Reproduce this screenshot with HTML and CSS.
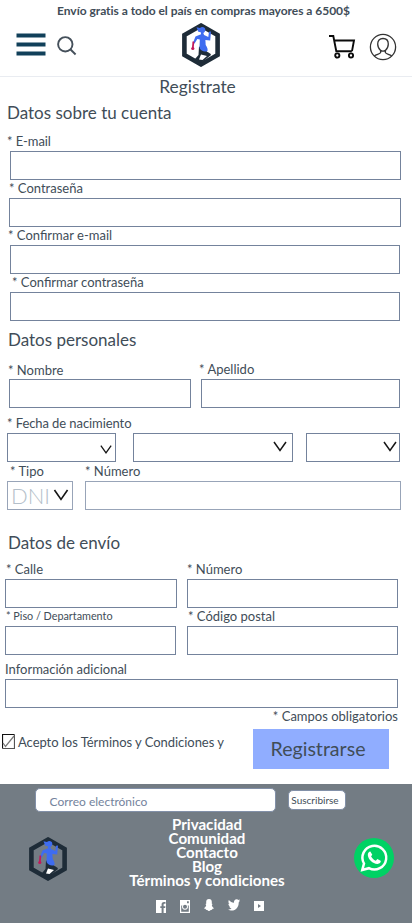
FILE: index.html
```html
<!DOCTYPE html>
<html lang="es">
<head>
<meta charset="utf-8">
<meta name="viewport" content="width=device-width, initial-scale=1">
<title>Registrate</title>
<link rel="stylesheet" href="styles.css">
</head>
<body>
<svg class="defs" width="0" height="0" aria-hidden="true">
  <symbol id="logo" viewBox="0 0 38 44">
    <path d="M19 2.600 35.600 12v20L19 41.400 2.400 32V12z" fill="none" stroke="#1e2c38" stroke-width="4.600"/>
    <path d="M17 23.500c3 2 5 1 7 4 1.600 2.500 4.500 2 5 4.500L19 40l-6-4 3.500-4z" fill="#1e2c38"/>
    <path d="M19 31.500l6 1.500-4.500 4-3.500-.5z" class="logo-gap"/>
    <path d="M14.500 4.300l3.500.7c2-1.800 5.300-.8 5.300 1.700 0 1.600-.8 2.600-2 3.400l.8 2 4.200 2 .7-5.300 2-.2-.8 8.800-4.800-.4.300 5c1 2 2.300 3 1.800 6-3 1.500-6.500 0-8-3l.3-8.500-2.500-.5-2.700 4.500-1.800-.3 2.700-6.700 5.500-2.300-.2-2-2.500-.5z" fill="#3e6cf0"/>
    <path d="M11.400 18.500l-.6 7" fill="none" stroke="#c2185b" stroke-width="1.800"/><circle cx="10.800" cy="25.500" r="1.600" fill="#c2185b"/>
  </symbol>
</svg>
<header class="header">
  <p class="promo">Envío gratis a todo el país en compras mayores a 6500$</p>
  <nav class="bar">
    <span class="burger"><i></i><i></i><i></i></span>
    <svg class="search" viewBox="0 0 20 20"><circle cx="8.300" cy="8.300" r="7.200"/><path d="M13.300 13.300l5.300 5.200"/></svg>
    <svg class="logo"><use href="#logo"/></svg>
    <svg class="cart" viewBox="0 0 28 25"><path d="M1 2h4.300l3 15.200h15.500M6.200 6.500h19.800l-2 10.700"/><circle cx="9.300" cy="21.500" r="2.100"/><circle cx="23" cy="21.500" r="2.100"/></svg>
    <svg class="user" viewBox="0 0 28 28"><circle cx="14" cy="14" r="12.600"/><path d="M14 5.500c-3.500 0-5.300 2.200-5.300 5.500 0 3 1.300 5 2.900 6.400v2.200c-.4 1.400-3.800 1.700-6.300 3.300M14 5.500c3.500 0 5.300 2.200 5.300 5.500 0 3-1.300 5-2.900 6.400v2.200c.4 1.400 3.800 1.700 6.300 3.300M11.600 17.400q2.400 1.600 4.800 0"/></svg>
  </nav>
</header>
<main>
  <h1>Registrate</h1>
  <section class="account">
    <h2>Datos sobre tu cuenta</h2>
    <div class="field email"><label>* E-mail</label><div class="box"></div></div>
    <div class="field pass"><label>* Contraseña</label><div class="box"></div></div>
    <div class="field email2"><label>* Confirmar e-mail</label><div class="box"></div></div>
    <div class="field pass2"><label>* Confirmar contraseña</label><div class="box"></div></div>
  </section>
  <section class="personal">
    <h2>Datos personales</h2>
    <div class="row names">
      <div class="field first"><label>* Nombre</label><div class="box"></div></div>
      <div class="field last"><label>* Apellido</label><div class="box"></div></div>
    </div>
    <div class="field birth"><label>* Fecha de nacimiento</label>
      <div class="row dates">
        <div class="box day"><svg class="chev" viewBox="0 0 14 11"><path d="M1 1l6 8.500L13 1"/></svg></div>
        <div class="box month"><svg class="chev" viewBox="0 0 14 11"><path d="M1 1l6 8.500L13 1"/></svg></div>
        <div class="box year"><svg class="chev" viewBox="0 0 14 11"><path d="M1 1l6 8.500L13 1"/></svg></div>
      </div>
    </div>
    <div class="row document">
      <div class="field type"><label>* Tipo</label><div class="box soft"><span>DNI</span><svg class="chev" viewBox="0 0 14 11"><path d="M1 1l6 8.500L13 1"/></svg></div></div>
      <div class="field docnum"><label>* Número</label><div class="box soft"></div></div>
    </div>
  </section>
  <section class="shipping">
    <h2>Datos de envío</h2>
    <div class="row address">
      <div class="field"><label>* Calle</label><div class="box"></div></div>
      <div class="field"><label>* Número</label><div class="box"></div></div>
    </div>
    <div class="row address second">
      <div class="field floor"><label>* Piso / Departamento</label><div class="box"></div></div>
      <div class="field postal"><label>* Código postal</label><div class="box"></div></div>
    </div>
    <div class="field extra"><label>Información adicional</label><div class="box"></div></div>
  </section>
  <p class="required">* Campos obligatorios</p>
  <div class="submit">
    <svg class="check" viewBox="0 0 13 15"><path d="M.5 14.500V.5h12" stroke="#111" /><path d="M12.500.5v14H.5" stroke="#555"/><path d="M1 9l2.500 3.500L12 2" stroke="#777"/></svg>
    <span class="terms">Acepto los Términos y Condiciones y</span>
    <button>Registrarse</button>
  </div>
</main>
<footer class="footer">
  <div class="newsletter"><div class="mail">Correo electrónico</div><button>Suscribirse</button></div>
  <div class="info">
    <svg class="logo flogo"><use href="#logo"/></svg>
    <div class="center">
      <a>Privacidad</a><a>Comunidad</a><a>Contacto</a><a>Blog</a><a>Términos y condiciones</a>
      <div class="social">
        <svg viewBox="0 0 10 13"><path fill-rule="evenodd" d="M0 0h10v13H7.600V8h1.600l.2-1.800H7.600V4.700c0-.6.200-.9.900-.9h1V2.100H8C6.300 2.100 5.600 3 5.600 4.500v1.700H4.300V8h1.300v5H0z"/></svg>
        <svg viewBox="0 0 10 13"><path fill-rule="evenodd" d="M0 0h10v13H0zM1.200 5.500v6.300h7.600V5.500H7.700a3 3 0 1 1-5.400 0zM7 1.200v2h1.800v-2zM5 4.800a2 2 0 1 0 0 4 2 2 0 0 0 0-4z"/></svg>
        <svg viewBox="0 0 10 13"><path d="M5 0C3.200 0 2.100 1.300 2.200 3v1.700l-.9.200.9 1C1.900 7.600.9 8.700 0 9.100c.3.700 1.400.8 1.600 1 .1.500.3.900 1.400.8.900 0 1.100 1.100 2 1.100s1.100-1.100 2-1.100c1.100.1 1.300-.3 1.400-.8.200-.2 1.300-.3 1.600-1-.9-.4-1.900-1.500-2.200-3.200l.9-1-.9-.2V3C7.900 1.300 6.800 0 5 0z"/></svg>
        <svg class="bird" viewBox="0 0 12 12"><path d="M12 1.600l-1.300 1.800C10.800 8 7.800 11.600 3.800 11.600c-1.400 0-2.700-.4-3.600-1.100 1.300.1 2.500-.2 3.400-1-1.200-.1-2-.8-2.300-1.900h1.100C1.100 7.200.4 6.100.4 4.800l1.100.3C.4 4.200.1 2.600.8 1.100 2.200 2.800 4 3.700 6 3.800 5.700 1.800 7 .3 8.600.3c.8 0 1.400.3 1.900.8L12 .6l-1 1.300z"/></svg>
        <svg class="tube" viewBox="0 0 10 10"><path fill-rule="evenodd" d="M0 0h10v10H0zM4 3v4l3-2z"/></svg>
      </div>
    </div>
    <svg class="whats" viewBox="0 0 40 40"><circle cx="20" cy="20" r="20" fill="#00d264"/><path d="M8.300 31.900l1.700-6.400a11.900 11.900 0 1 1 4.900 4.700z" fill="none" stroke="#fff" stroke-width="2.500"/><path d="M16.500 13.700c-.8-.5-2.800 1-2.700 3.200.3 4.300 5 8.700 9.500 9 2.400.1 4-1.900 3.300-3.100l-3.200-1.700-1.600 1.600c-2.300-.8-4-2.600-4.700-4.400l1.200-1.500z" fill="#fff"/></svg>
  </div>
</footer>
</body>
</html>
```

FILE: styles.css
```css
* { box-sizing: border-box; }
body { margin: 0; background: #fff; color: #414d58; font-family: Lato, "Liberation Sans", sans-serif; font-size: 13px; }
svg { display: block; flex: none; }
.defs { position: absolute; }
h1, h2, p { margin: 0; font-weight: 400; }

.header { height: 77px; border-bottom: 1px solid #e9ecf1; }
.promo { height: 22px; line-height: 22px; font-size: 12px; letter-spacing: -0.025px; font-weight: 700; text-align: center; margin-right: 5px; }
.bar { display: flex; align-items: flex-start; padding-left: 17px; }
.burger { width: 28px; margin-top: 12px; display: flex; flex-direction: column; gap: 6px; }
.burger i { height: 3px; background: #11405a; box-shadow: 0 0 0 .5px #11405a; }
.search { width: 20px; height: 20px; margin: 14px 0 0 12px; fill: none; stroke: #45505b; stroke-width: 1.900; }
.logo { width: 38px; height: 44px; }
.bar .logo { margin: 1px 0 0 105px; }
.logo-gap { fill: #fff; }
.cart { width: 28px; height: 25px; margin: 12px 0 0 108px; fill: none; stroke: #0b0b0b; stroke-width: 1.900; }
.user { width: 28px; height: 28px; margin: 11px 0 0 13px; fill: none; stroke: #333; stroke-width: 1.300; }

h1 { height: 21px; line-height: 20px; font-size: 17.400px; text-align: center; margin-right: 17px; }
h2 { height: 23px; line-height: 23px; font-size: 17px; padding-left: 8px; }
label { display: block; height: 18px; line-height: 16px; white-space: nowrap; }
.box { height: 29px; border: 1px solid #74839c; background: #fff; }
.soft { border-color: #98a4b8; }
.row { display: flex; }

.account { padding-top: 4px; }
.account h2 { padding-left: 7px; margin-bottom: 8px; line-height: 22px; }
.email, .email2, .pass2 { margin: 0 12px 0 10px; }
.email { margin: 0 11px 0 10px; }
.email label { margin-left: -3px; letter-spacing: -0.100px; }
.pass { margin: 0 11px 0 9px; }
.email2 label { margin-left: -2px; }
.pass2 label { margin-left: 2px; }
.personal h2 { margin-top: 8px; line-height: 22px; }
.names { padding: 9px 12px 0 9px; gap: 10px; }
.first { width: 182px; }
.last { flex: 1; }
.first label { margin-left: -1px; padding-top: 1px; }
.last label { margin-left: -2px; }
.birth { padding: 7px 12px 0 7px; }
.birth label { letter-spacing: -0.080px; }
.dates .box { display: flex; justify-content: flex-end; }
.day { width: 109px; }
.month { width: 160px; margin: 0 13px 0 17px; }
.year { flex: 1; }
.chev { width: 14px; height: 11px; margin: 7px 5px 0 0; fill: none; stroke: #161616; stroke-width: 1.500; }
.day .chev { width: 12px; margin: 10px 3px 0 0; }
.year .chev { margin-right: 2px; }
.document { padding: 1px 11px 0 7px; gap: 12px; }
.type { width: 66px; }
.docnum { flex: 1; }
.type label { margin-left: 3px; }
.type .box { display: flex; justify-content: space-between; line-height: 28px; padding-left: 3px; color: #b4bfca; font-size: 22px; font-weight: 300; }
.type .chev { width: 16px; height: 12px; margin-right: 3px; }

.shipping h2 { margin-top: 21px; }
.address { padding: 6px 14px 0 5px; gap: 10px; }
.address .field:first-child { width: 172px; }
.address .field:last-child { flex: 1; }
.address label { height: 19px; line-height: 19px; margin-left: 1px; }
.address .field:last-child label { margin-left: 0; }
.second { padding-top: 0; gap: 11px; }
.address.second .floor { width: 171px; }
.address.second label { height: 18px; line-height: 17px; }
.address.second .floor label { font-size: 10.800px; line-height: 15px; }
.address.second .postal label { margin-left: 1px; }
.extra { padding: 5px 14px 0 5px; }
.extra label { height: 19px; line-height: 18px; }
.required { height: 18px; line-height: 17px; text-align: right; padding-right: 14px; }
.submit { height: 58px; display: flex; padding: 3px 0 0 2px; }
.check { width: 13px; height: 15px; margin: 5px 0 0; fill: none; stroke-width: 1.200; }
.terms { width: 235px; height: 26px; line-height: 26px; margin-left: 3px; letter-spacing: -0.040px; white-space: nowrap; }
.submit button { width: 136px; height: 40px; border: 0; padding: 0 6px 1px 0; background: #90adff; color: #414d58; font: 400 19.600px Lato, sans-serif; }

.footer { height: 139px; background: #737c84; color: #fff; padding-top: 4px; }
.newsletter { display: flex; height: 28px; padding-left: 35px; }
.mail { width: 241px; height: 24px; border: 1px solid #8290a8; border-radius: 5px; background: #fff; color: #74839c; font-size: 12px; line-height: 25px; padding-left: 13.500px; }
.newsletter button { width: 58px; height: 20px; margin: 2px 0 0 12px; padding: 0 4px 1px 0; border: 1px solid #8290a8; border-radius: 5px; background: #fff; color: #414d58; font: 400 10px Lato, sans-serif; }
.info { display: flex; }
.flogo { margin: 21px 0 0 29px; }
.flogo .logo-gap { fill: #737c84; }
.center { width: 160px; margin-left: 60px; display: flex; flex-direction: column; align-items: center; padding-top: 1px; }
.center a { height: 14px; line-height: 14px; font-size: 15.100px; font-weight: 700; white-space: nowrap; }
.social { display: flex; width: 108px; justify-content: space-between; margin: 11px 0 0 5px; }
.social svg { width: 10px; height: 13px; fill: #fff; margin-top: 2px; }
.social svg:nth-child(3) { margin-top: 1px; }
.social .bird { width: 12px; height: 12px; margin-top: 1px; }
.social .tube { height: 10px; margin-top: 3px; }
.whats { width: 40px; height: 40px; margin: 22px 0 0 67px; }
```
